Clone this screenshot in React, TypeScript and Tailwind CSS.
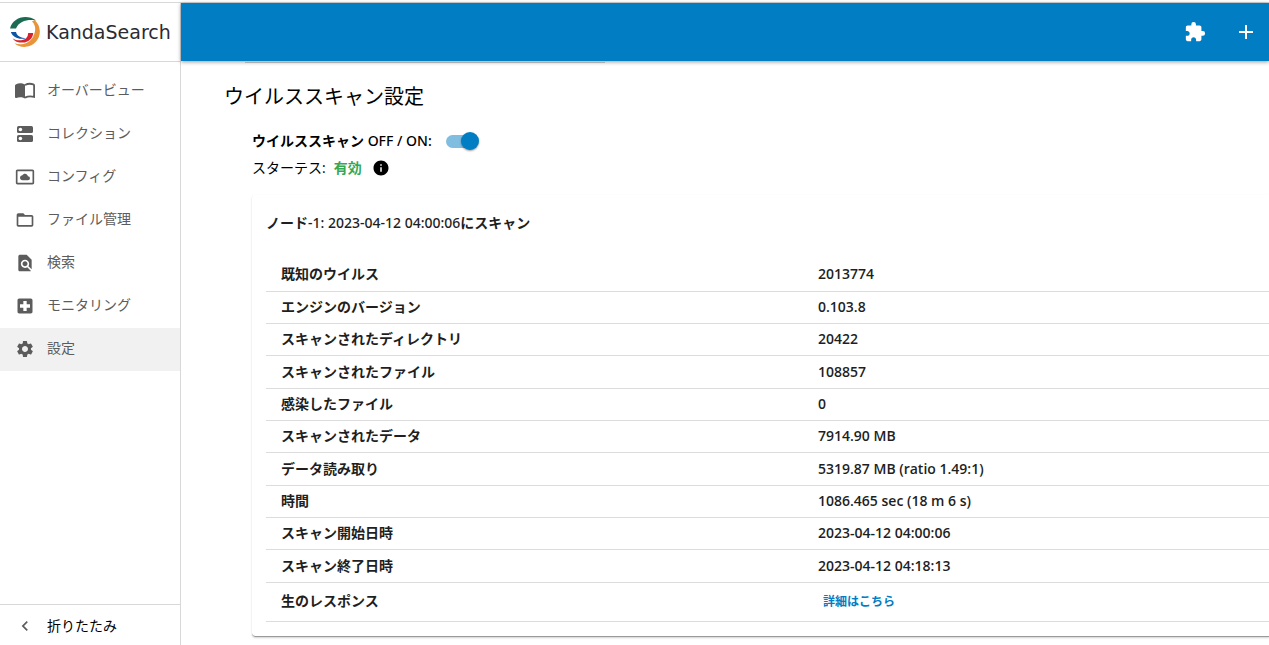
import React, { useState } from "react";
import {
  MdAdd,
  MdChevronLeft,
  MdExtension,
  MdFindInPage,
  MdFolderOpen,
  MdInfo,
  MdLocalHospital,
  MdSettings,
  MdSettingsSystemDaydream,
} from "react-icons/md";

const BookIcon = ({ size = 20 }: { size?: number }) => (
  <svg width={size} height={size} viewBox="0 0 20 20" fill="none">
    <path
      d="M1.6 2.9C4 2 7.4 2.1 10 3.6V17.5C7.4 16 4 15.9 1.4 16.9Q0 17.3 0 16V4.5Q0 3.4 1.6 2.9Z"
      fill="currentColor"
    />
    <path
      d="M10 4C12.6 2.6 15.8 2.5 18.3 3.3Q19.1 3.6 19.1 4.5V15.9C16 15.1 12.8 15.2 10 16.6"
      stroke="currentColor"
      strokeWidth="1.8"
    />
  </svg>
);

const CollectionIcon = ({ size = 20 }: { size?: number }) => (
  <svg width={size} height={size} viewBox="0 0 20 20">
    <rect x="2" y="2" width="16" height="7" rx="1.6" fill="currentColor" />
    <rect x="2" y="11" width="16" height="7" rx="1.6" fill="currentColor" />
    <circle cx="5.4" cy="5.5" r="1.8" fill="white" />
    <circle cx="5.4" cy="14.5" r="1.8" fill="white" />
  </svg>
);

const Logo = () => (
  <svg width="30" height="30" viewBox="0 0 30 30" fill="none">
    <path d="M24.5 3A15 15 0 1 1 4.5 26.2C11 28.5 18 27 22 21.5C26 15.5 26.5 8.5 22 4.5Z" fill="#e8953a" />
    <path d="M0 11.5C2.5 1.5 15 -4 26.5 3.5C18 2 9 4 6 11.5Z" fill="#1b6b52" />
    <path d="M0.8 15H6C7 19 11 21.2 16 21.2C9 23 3 20.5 0.8 15Z" fill="#0e55a4" />
    <path d="M2.5 21.2C7 24.2 12.5 23.8 16 21.5Q18 20 18.2 16H23.2C23 21.5 18 25.5 13 25.6C8.5 25.7 4.5 24.5 2.5 21.2Z" fill="#d5232f" />
  </svg>
);

const Sidebar = () => {
  const links = [
    { id: 1, label: "オーバービュー", icon: BookIcon },
    { id: 2, label: "コレクション", icon: CollectionIcon },
    { id: 3, label: "コンフィグ", icon: MdSettingsSystemDaydream },
    { id: 4, label: "ファイル管理", icon: MdFolderOpen },
    { id: 5, label: "検索", icon: MdFindInPage },
    { id: 6, label: "モニタリング", icon: MdLocalHospital },
    { id: 7, label: "設定", icon: MdSettings, active: true },
  ];

  return (
    <aside className="flex w-[181px] shrink-0 flex-col border-r border-[#d8d8d8]">
      <a href="#home" className="flex h-[59px] items-center gap-[6px] border-b border-[#d8d8d8] pl-[10px]">
        <Logo />
        <span className="font-['DejaVu_Sans',sans-serif] text-[19px] leading-6 text-[#2b2b33]">KandaSearch</span>
      </a>

      <nav className="flex-1 pt-2">
        {links.map(({ id, label, icon: Icon, active }) => (
          <a
            key={id}
            href={`#${id}`}
            className={`flex h-[43px] items-center gap-3 pb-[2px] pl-[15px] text-sm text-[#5c5c5c] ${active ? "bg-[#f1f1f1]" : ""}`}
          >
            <Icon size={20} />
            <span className="pb-[2px]">{label}</span>
          </a>
        ))}
      </nav>

      <button className="flex h-[41px] items-center gap-3 border-t border-[#d8d8d8] pl-[15px] pt-[2px] text-sm">
        <MdChevronLeft size={20} color="#5c5c5c" />
        折りたたみ
      </button>
    </aside>
  );
};

const ScanTable = () => {
  const rows = [
    { label: "既知のウイルス", value: "2013774" },
    { label: "エンジンのバージョン", value: "0.103.8" },
    { label: "スキャンされたディレクトリ", value: "20422" },
    { label: "スキャンされたファイル", value: "108857" },
    { label: "感染したファイル", value: "0" },
    { label: "スキャンされたデータ", value: "7914.90 MB" },
    { label: "データ読み取り", value: "5319.87 MB (ratio 1.49:1)" },
    { label: "時間", value: "1086.465 sec (18 m 6 s)" },
    { label: "スキャン開始日時", value: "2023-04-12 04:00:06" },
    { label: "スキャン終了日時", value: "2023-04-12 04:18:13" },
  ];

  return (
    <table className="w-full border-collapse text-left text-sm">
      <tbody>
        {rows.map(({ label, value }) => (
          <tr key={label} className="h-8 border-b border-[#dcdcdc] nth-[3n+1]:h-[33px]">
            <th scope="row" className="w-[538px] pl-[15px] font-bold">
              {label}
            </th>
            <td className="pl-[14px] font-semibold">{value}</td>
          </tr>
        ))}
        <tr className="h-[39px] border-b border-[#dcdcdc]">
          <th scope="row" className="pb-[2px] pl-[15px] font-bold">
            生のレスポンス
          </th>
          <td className="pb-[2px] pl-[19px]">
            <button className="text-xs font-bold text-[#007dc3]">詳細はこちら</button>
          </td>
        </tr>
      </tbody>
    </table>
  );
};

const App = () => {
  const [enabled, setEnabled] = useState(true);

  return (
    <div className="flex h-screen flex-col overflow-hidden bg-white pt-[2px] font-['Open_Sans','Noto_Sans_CJK_JP',sans-serif] text-black">
      <div className="flex min-h-0 flex-1 border-t border-[#d8d8d8]">
        <Sidebar />

        <div className="flex min-w-0 flex-1 flex-col">
          <header className="z-10 flex h-[58px] shrink-0 items-center justify-end gap-[28px] bg-[#007dc3] pr-[11px] text-white shadow-[0_1px_4px_rgba(0,0,0,0.4)]">
            <button aria-label="Extensions">
              <MdExtension size={22} />
            </button>
            <button aria-label="Add">
              <MdAdd size={24} />
            </button>
          </header>

          <main className="flex-1 overflow-hidden">
            <div className="ml-16 h-[2px] w-[360px] border-b border-[#d0d0d0]" />
            <h1 className="mt-[19px] pl-[43px] text-xl leading-[30px]">ウイルススキャン設定</h1>

            <div className="mt-[15px] pl-[71px] text-sm">
              <div className="flex h-7 items-center">
                <label htmlFor="scan" className="font-['Noto_Sans','Noto_Sans_CJK_JP',sans-serif] font-medium">
                  <b>ウイルススキャン</b> OFF / ON:
                </label>
                <input
                  id="scan"
                  type="checkbox"
                  role="switch"
                  checked={enabled}
                  onChange={() => setEnabled(!enabled)}
                  className="ml-[14px] flex h-[13px] w-8 appearance-none items-center rounded-full bg-[#b5b5b5] before:h-[18px] before:w-[18px] before:shrink-0 before:rounded-full before:bg-white before:shadow-[0_1px_2px_rgba(0,0,0,0.4)] checked:bg-[#7fbde1] checked:before:ml-[15px] checked:before:bg-[#007dc3]"
                />
              </div>
              <div className="flex h-[26px] items-center">
                <span>スターテス:</span>
                <span className="ml-2 font-bold text-[#34a853]">有効</span>
                <MdInfo size={18} className="ml-[10px]" />
              </div>
            </div>

            <section className="ml-[71px] mt-[14px] rounded-l border-b border-[#9a9a9a] pb-[14px] pl-[14px] text-[#1f1f1f] shadow-[0_1px_2px_rgba(0,0,0,0.18)]">
              <h2 className="pb-[25px] pt-[18px] font-['Noto_Sans','Noto_Sans_CJK_JP',sans-serif] text-sm font-medium leading-5">
                <b>ノード</b>-1: 2023-04-12 04:00:06<b>にスキャン</b>
              </h2>
              <ScanTable />
            </section>
          </main>
        </div>
      </div>
    </div>
  );
};

export default App;
